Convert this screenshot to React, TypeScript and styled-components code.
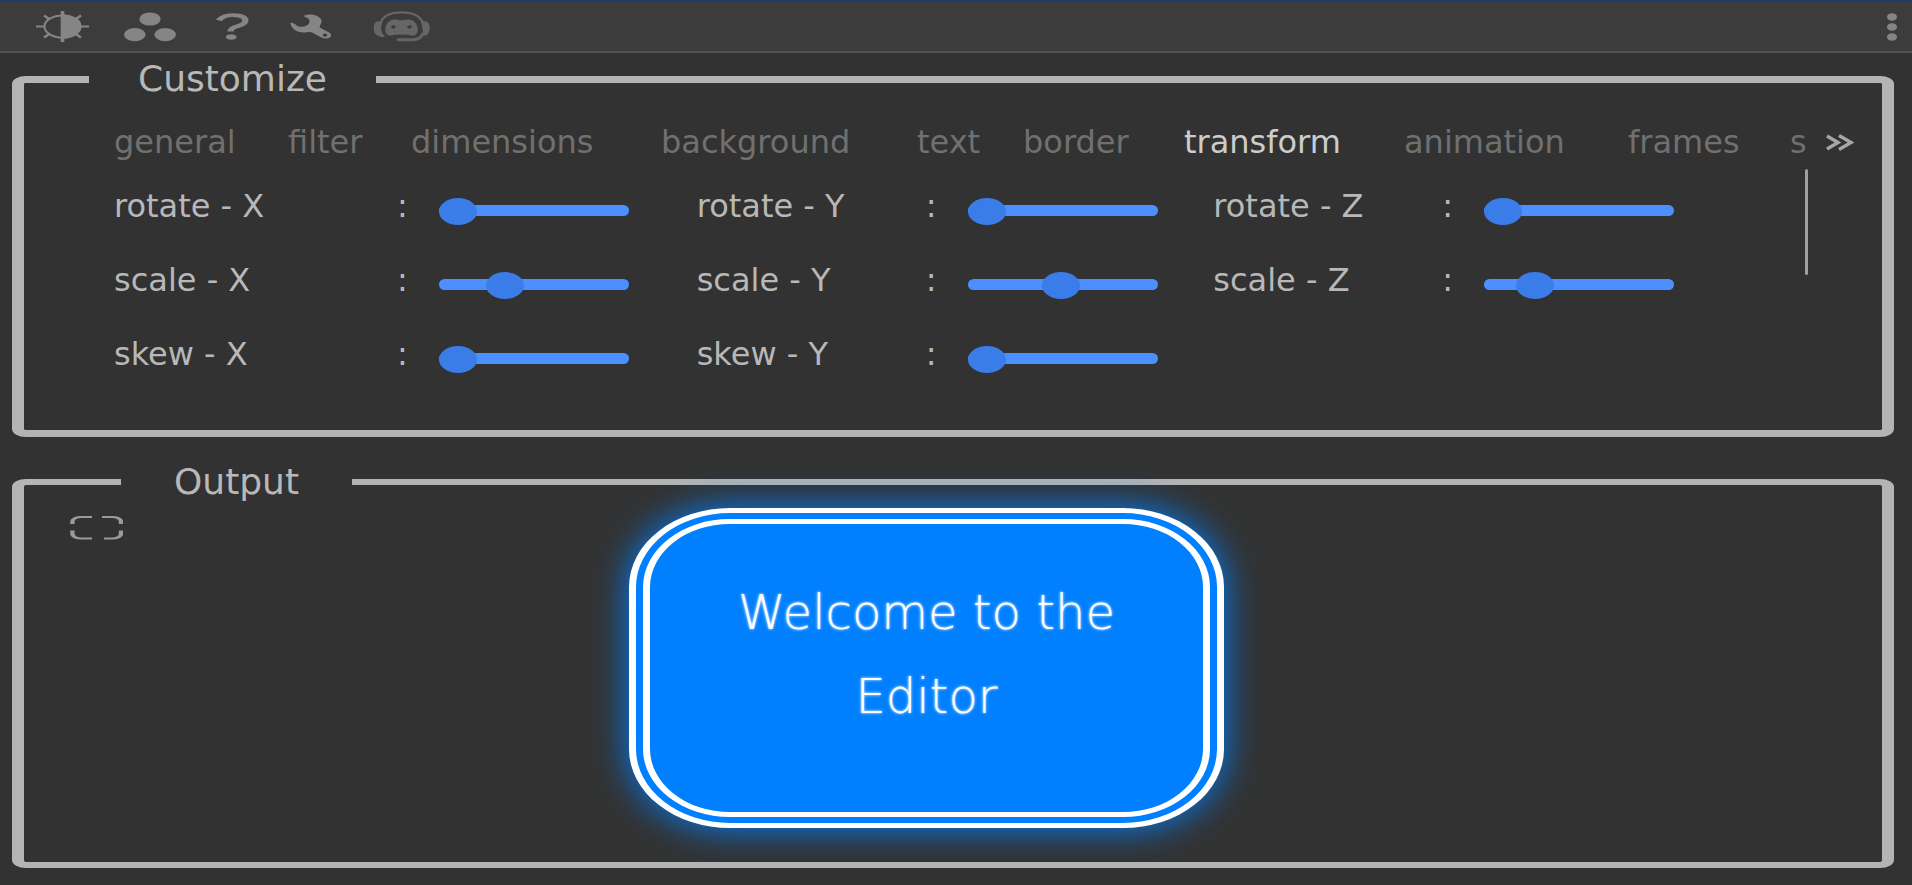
import React, { useState } from "react";
import styled, { createGlobalStyle } from "styled-components";

const GlobalStyle = createGlobalStyle`
  * { box-sizing: border-box; }
  body {
    margin: 0;
    background: #323232;
    color: #b8b8b8;
    font-family: "DejaVu Sans", "Open Sans", sans-serif;
  }
`;

const Page = styled.div`
  display: flex;
  flex-direction: column;
  min-height: 100vh;
`;

const Toolbar = styled.header`
  display: flex;
  justify-content: space-between;
  align-items: center;
  height: 53px;
  padding: 0 15px 0 36px;
  background: #3c3c3c;
  border-top: 2px solid #1f3b68;
  border-bottom: 2px solid #505050;
`;

const Tools = styled.div`
  display: flex;
  align-items: center;
  gap: 35px;
`;

const IconButton = styled.button<{ $width?: number; $color?: string }>`
  display: flex;
  flex: none;
  justify-content: center;
  width: ${(p) => (p.$width ? `${p.$width}px` : "auto")};
  padding: 0;
  border: 0;
  background: none;
  color: ${(p) => p.$color ?? "#858585"};
  cursor: pointer;
`;

const Main = styled.main`
  display: flex;
  flex: 1;
  flex-direction: column;
  gap: 29px;
  padding: 10px 18px 17px 12px;
`;

const Panel = styled.fieldset<{ $grow?: boolean }>`
  min-width: 0;
  margin: 0;
  padding: 0 74px 0 90px;
  border: solid #b4b4b4;
  border-width: ${(p) => (p.$grow ? "6px 12px" : "7px 12px")};
  border-radius: 14px / 8px;
  flex: ${(p) => (p.$grow ? "1" : "none")};
`;

const Title = styled.legend<{ $indent: number; $inset: number }>`
  margin-left: ${(p) => p.$indent}px;
  padding: 0 ${(p) => p.$inset}px;
  font-size: 36px;
  line-height: 32px;
`;

const TabRow = styled.nav`
  display: flex;
  align-items: center;
  gap: 20px;
  margin: 25px -46px 5px 0;
`;

const Tabs = styled.div`
  display: grid;
  flex: 1;
  min-width: 0;
  grid-template-columns: 174fr 123fr 250fr 256fr 106fr 161fr 220fr 224fr 162fr 16fr;
`;

const Tab = styled.button<{ $active: boolean }>`
  min-width: 0;
  padding: 0;
  border: 0;
  background: none;
  color: ${(p) => (p.$active ? "#cccccc" : "#707070")};
  font: inherit;
  font-size: 32px;
  line-height: 44px;
  text-align: left;
  white-space: nowrap;
  cursor: pointer;
`;

const Scroller = styled.div`
  display: flex;
  justify-content: space-between;
  min-height: 261px;
`;

const Controls = styled.div`
  display: grid;
  flex: 1;
  grid-template-columns: 582fr 516fr 591fr;
  grid-auto-rows: 74px;
`;

const Field = styled.div<{ $labelWidth: number }>`
  display: grid;
  grid-template-columns: ${(p) => p.$labelWidth}px 42px 190px;
  align-items: center;
  height: 74px;
  font-size: 32px;
  line-height: 44px;
`;

const Slider = styled.input`
  appearance: none;
  width: 190px;
  height: 11px;
  margin: 8px 0 0;
  border-radius: 6px;
  background: #4c8fff;
  &::-webkit-slider-thumb {
    appearance: none;
    width: 38px;
    height: 27px;
    margin-top: 2px;
    border-radius: 50%;
    background: #3a7de9;
  }
`;

const ScrollThumb = styled.div`
  width: 3px;
  height: 106px;
  border-radius: 2px;
  background: #a0a0a0;
`;

const Stage = styled.div`
  display: flex;
  align-items: flex-start;
  margin: 10px 78px 28px -44px;
  padding-bottom: 4px;
`;

const StageTools = styled.div`
  padding-top: 8px;
`;

const Preview = styled.div`
  width: 595px;
  height: 320px;
  margin: 0 auto;
  padding-top: 46px;
  border: double #ffffff;
  border-width: 16px 21px;
  border-radius: 101px / 79px;
  background: #0080ff;
  box-shadow: 0 0 36px #0080ff;
  color: #ffffff;
  font-size: 48px;
  font-weight: 200;
  line-height: 84px;
  text-align: center;
  text-shadow: 0 0 3px #ffffff;
`;

const tabs = ["general", "filter", "dimensions", "background", "text", "border", "transform", "animation", "frames", "s"];

const fields = [
  { label: "rotate - X", width: 283, value: 0 },
  { label: "rotate - Y", width: 229, value: 0 },
  { label: "rotate - Z", width: 229, value: 0 },
  { label: "scale - X", width: 283, value: 31 },
  { label: "scale - Y", width: 229, value: 49 },
  { label: "scale - Z", width: 229, value: 21 },
  { label: "skew - X", width: 283, value: 0 },
  { label: "skew - Y", width: 229, value: 0 },
];

function SliderField({ label, width, value }: { label: string; width: number; value: number }) {
  const id = label.replace(" - ", "-");
  return (
    <Field $labelWidth={width}>
      <label htmlFor={id}>{label}</label>
      <span>:</span>
      <Slider id={id} type="range" min={0} max={100} defaultValue={value} />
    </Field>
  );
}

const ContrastIcon = () => (
  <svg width="53" height="31" viewBox="0 0 53 31" fill="none" stroke="currentColor" strokeWidth="2">
    <ellipse cx="26.5" cy="15.5" rx="18" ry="11" />
    <path d="M26.5 4.5a18 11 0 0 1 0 22z" fill="currentColor" />
    <path d="M0 15.5h9M44 15.5h9" />
    <path d="M8 4.5l6 4M45 4.5l-6 4M8 26.5l6-4M45 26.5l-6-4" strokeWidth="2.6" />
    <path d="M26.5 0v31" strokeWidth="3.6" />
  </svg>
);

const DotsIcon = () => (
  <svg width="52" height="30" viewBox="0 0 52 30" fill="currentColor">
    <ellipse cx="26" cy="7" rx="10.7" ry="6.6" />
    <ellipse cx="10.8" cy="22.6" rx="10.8" ry="6.6" />
    <ellipse cx="41.2" cy="22.6" rx="10.8" ry="6.6" />
  </svg>
);

const HelpIcon = () => (
  <svg width="33" height="27" viewBox="0 0 20 27" preserveAspectRatio="none" fill="none" stroke="currentColor" strokeWidth="3.8">
    <path d="M1.6 7.4Q4.5 2.2 10 2.2Q17.8 2.2 17.8 7.8Q17.8 11.2 13 13.2Q8.8 15 8.8 18.6" />
    <ellipse cx="9.2" cy="24" rx="3.3" ry="2.8" fill="currentColor" stroke="none" />
  </svg>
);

const WrenchIcon = () => (
  <svg width="42" height="25" viewBox="30 25 126 76" preserveAspectRatio="none" fill="currentColor">
    <path
      fillRule="evenodd"
      d="M33 50Q28 60 41 71Q55 82 76 81Q90 79 96 81L126 97Q138 102 148 97Q158 91 150 83L119 66Q118 61 124 52Q128 38 110 30Q90 23 70 31L84 38Q92 45 86 55Q80 63 66 64Q52 64 46 56ZM128 89A7 5 0 1 0 142 89A7 5 0 1 0 128 89Z"
    />
  </svg>
);

const SupportIcon = () => (
  <svg width="57" height="31" viewBox="277 20 170 94" preserveAspectRatio="none" fill="none" stroke="currentColor" strokeWidth="7">
    <path d="M300 54Q312 24 362 24Q412 24 425 54" />
    <path d="M302 50L288 52Q279 56 279 72Q279 88 290 94L302 99Q308 101 313 96Q301 86 301 72Q301 60 306 52Z" fill="currentColor" stroke="none" />
    <path d="M423 50L437 52Q446 56 446 72Q446 88 435 94L424 95Q428 84 424 72Q424 60 419 52Z" fill="currentColor" stroke="none" />
    <path
      d="M322 54Q330 44 344 46Q362 50 380 46Q394 44 402 54Q411 64 411 78Q409 92 396 95Q386 91 362 91Q340 91 328 95Q314 92 313 78Q313 64 322 54ZM331 68A7 5 0 1 0 345 68A7 5 0 1 0 331 68ZM379 68A7 5 0 1 0 393 68A7 5 0 1 0 379 68Z"
      fill="currentColor"
      fillRule="evenodd"
      stroke="none"
    />
    <path d="M425 90Q419 107 396 107H352" strokeWidth="9" strokeLinecap="round" />
  </svg>
);

const MoreIcon = () => (
  <svg width="10" height="28" viewBox="0 0 10 28" fill="currentColor">
    <ellipse cx="5" cy="4" rx="5" ry="3.8" />
    <ellipse cx="5" cy="14" rx="5" ry="3.8" />
    <ellipse cx="5" cy="24" rx="5" ry="3.8" />
  </svg>
);

const NextIcon = () => (
  <svg width="28" height="17" viewBox="0 0 28 17" fill="none" stroke="currentColor" strokeWidth="3.4">
    <path d="M1 2l11 6.5L1 15M13 1.5l12 7l-12 7" />
  </svg>
);

const FullscreenIcon = () => (
  <svg width="53" height="24" viewBox="0 0 26.5 24" preserveAspectRatio="none" fill="none" stroke="currentColor" strokeWidth="2.2">
    <path d="M1.2 8V5.5a4.5 4.5 0 0 1 4.5-4.500H11M16 1h5a4.5 4.5 0 0 1 4.5 4.5V8M1.2 14.5V18a4.5 4.5 0 0 0 4.5 4.5H11M17 22.500h4a4.5 4.5 0 0 0 4.5-4.5V14.5" />
  </svg>
);

export default function App() {
  const [active, setActive] = useState("transform");
  return (
    <Page>
      <GlobalStyle />
      <Toolbar>
        <Tools>
          <IconButton aria-label="Theme" $width={53}><ContrastIcon /></IconButton>
          <IconButton aria-label="Templates" $width={52}><DotsIcon /></IconButton>
          <IconButton aria-label="Help" $width={43}><HelpIcon /></IconButton>
          <IconButton aria-label="Tools" $width={43}><WrenchIcon /></IconButton>
          <IconButton aria-label="Support" $width={68} $color="#666666"><SupportIcon /></IconButton>
        </Tools>
        <IconButton aria-label="More"><MoreIcon /></IconButton>
      </Toolbar>
      <Main>
        <Panel>
          <Title $indent={-25} $inset={49}>Customize</Title>
          <TabRow>
            <Tabs>
              {tabs.map((t) => (
                <Tab key={t} $active={t === active} onClick={() => setActive(t)}>{t}</Tab>
              ))}
            </Tabs>
            <IconButton aria-label="Next tabs" $color="#a6a6a6"><NextIcon /></IconButton>
          </TabRow>
          <Scroller>
            <Controls>
              {fields.map((f) => <SliderField key={f.label} {...f} />)}
            </Controls>
            <ScrollThumb />
          </Scroller>
        </Panel>
        <Panel $grow>
          <Title $indent={7} $inset={53}>Output</Title>
          <Stage>
            <StageTools>
              <IconButton aria-label="Fullscreen" $color="#9a9a9a"><FullscreenIcon /></IconButton>
            </StageTools>
            <Preview>Welcome to the<br />Editor</Preview>
          </Stage>
        </Panel>
      </Main>
    </Page>
  );
}
